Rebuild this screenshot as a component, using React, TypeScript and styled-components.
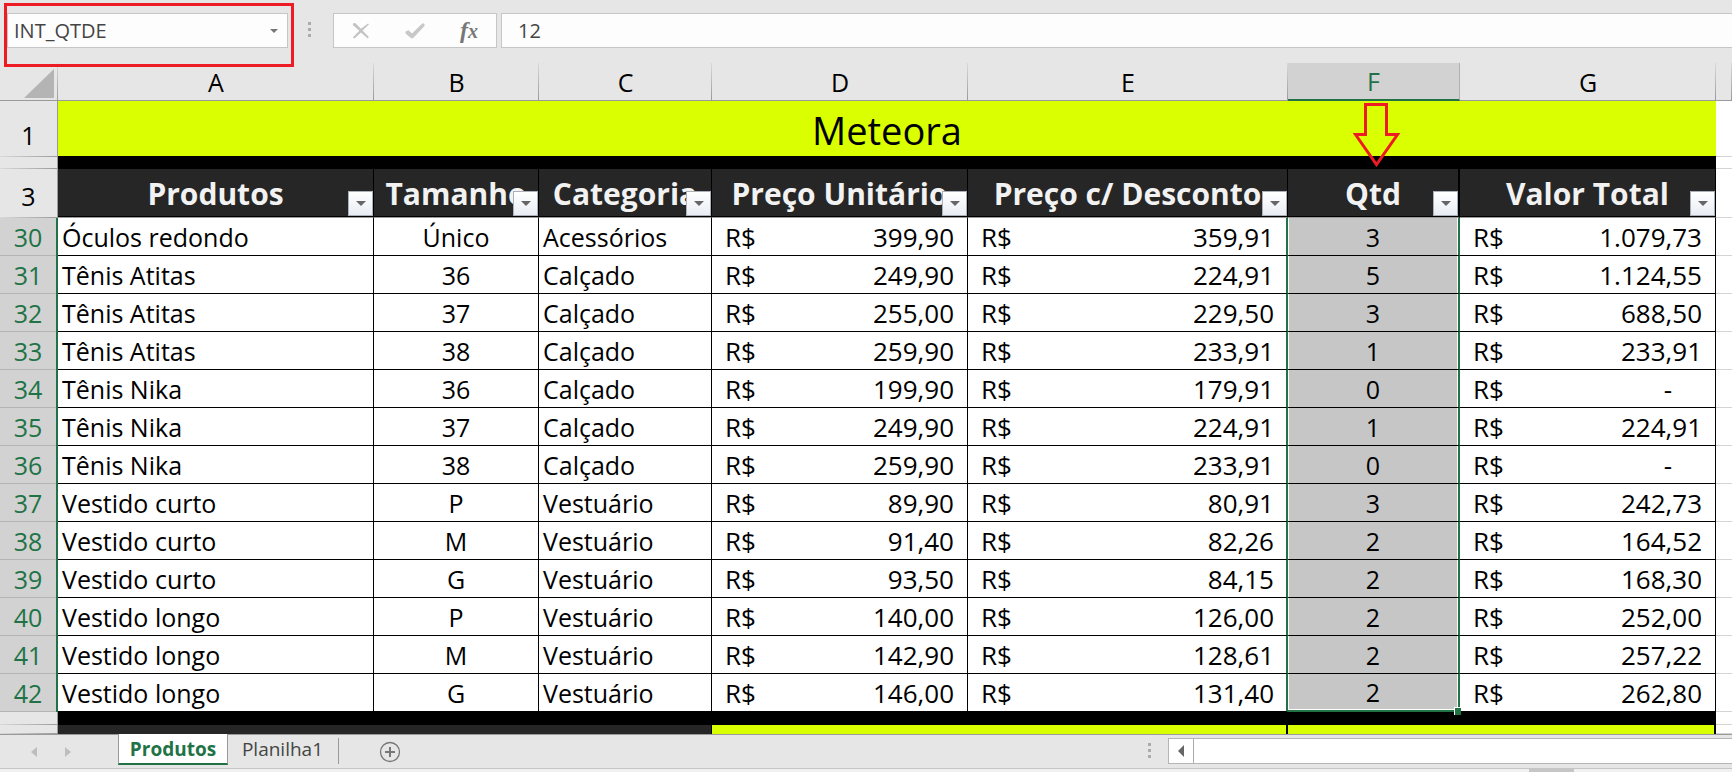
import React from 'react';
import styled, { createGlobalStyle, css } from 'styled-components';

const GREEN = '#217346';
const LIME = '#d9ff00';
const RED = '#ed1c24';

const GlobalStyle = createGlobalStyle`
  * { box-sizing: border-box; }
  body { margin: 0; background: #e6e6e6; font-family: 'Open Sans', 'Noto Sans', sans-serif; color: #000; }
  button, input { font-family: inherit; margin: 0; padding: 0; border: 0; background: none; border-radius: 0; }
  button { cursor: pointer; }
  table { border-collapse: separate; border-spacing: 0; }
`;

const Window = styled.div`
  display: flex;
  flex-direction: column;
  min-height: 100vh;
  overflow: hidden;
`;

const FormulaBar = styled.header`
  display: flex;
  align-items: flex-start;
  padding: 13px 0 15px 7px;
`;

const NameBox = styled.div`
  position: relative;
  display: flex;
  width: 281px;
  height: 35px;
  background: #fdfdfd;
  border: 1px solid #c6c6c6;
`;

const Highlight = styled.div`
  position: absolute;
  inset: -11px -7px -20px -4px;
  z-index: 3;
  border: 3px solid ${RED};
  pointer-events: none;
`;

const BarInput = styled.input`
  flex: 1;
  min-width: 0;
  padding-left: ${(p: { $indent: number }) => p.$indent}px;
  font-size: 20px;
  line-height: 32px;
  color: #444;
  outline: 0;
`;

const NameArrow = styled.button`
  display: grid;
  place-items: center;
  width: 26px;
`;

const Dots = styled.div<{ $color: string }>`
  display: grid;
  gap: 3px;
  i { width: 3px; height: 3px; background: ${(p) => p.$color}; }
`;

const BarDots = styled(Dots)`
  margin: 9px 22px 0 20px;
`;

const FormulaTools = styled.div`
  display: flex;
  justify-content: space-around;
  align-items: center;
  width: 164px;
  height: 35px;
  margin-right: 4px;
  background: #fdfdfd;
  border: 1px solid #c6c6c6;
`;

const ToolButton = styled.button`
  display: grid;
  place-items: center;
  width: 32px;
  height: 32px;
`;

const Fx = styled.span`
  font: italic 700 24px/28px 'Liberation Serif', serif;
  color: #777;
  small { font-size: 20px; }
`;

const FormulaField = styled.div`
  display: flex;
  flex: 1;
  height: 35px;
  background: #fdfdfd;
  border: 1px solid #c6c6c6;
  border-right: 0;
`;

const SheetArea = styled.main`
  flex: 1;
  background: #fff;
`;

const Sheet = styled.table`
  width: 100%;
  table-layout: fixed;
  font-size: 25px;
  line-height: 36px;
  white-space: nowrap;
  th, td { padding: 0; overflow: hidden; font-weight: 400; }
`;

const fade = (dir: string) =>
  `linear-gradient(${dir}, #d9d9d9, #9a9a9a)`;

const ColumnHead = styled.th<{ $selected?: boolean }>`
  height: 38px;
  line-height: 36px;
  background: ${fade('to bottom')} right / 1px 100% no-repeat, #e6e6e6;
  border-bottom: 1px solid #9a9a9a;
  ${(p) =>
    p.$selected &&
    css`
      && { overflow: visible; }
      position: relative;
      z-index: 2;
      background: #d2d2d2;
      color: ${GREEN};
      border-right: 1px solid #b0b0b0;
      border-bottom: 2px solid ${GREEN};
    `}
`;

const Corner = styled(ColumnHead)`
  svg { display: block; margin: 3px 0 0 24px; }
`;

const RowHead = styled.th<{ $selected?: boolean }>`
  background: ${fade('to right')} bottom / 100% 1px no-repeat, #e6e6e6;
  border-right: 1px solid #9a9a9a;
  vertical-align: ${(p) => (p.$selected ? 'middle' : 'bottom')};
  && { padding-bottom: ${(p) => (p.scope && !p.$selected ? 4 : 0)}px; }
  ${(p) =>
    p.$selected &&
    css`
      background: linear-gradient(#b4b4b4, #b4b4b4) bottom / 100% 1px no-repeat, #d2d2d2;
      color: ${GREEN};
      border-right: 2px solid ${GREEN};
    `}
`;

const Arrow = styled.svg`
  position: absolute;
  top: 40px;
  left: 65px;
  pointer-events: none;
`;

const TitleRow = styled.tr`
  height: 56px;
`;

const TitleCell = styled.td`
  background: ${LIME};
  border-bottom: 1px solid #000;
  text-align: center;
  font-size: 38px;
  line-height: 52px;
  && { padding-top: 2px; }
`;

const GapRow = styled.tr<{ $height: number }>`
  height: ${(p) => p.$height}px;
  line-height: 0;
`;

const Fill = styled.td<{ $color: string; $edge?: number }>`
  background: ${(p) => p.$color};
  border-right: ${(p) => p.$edge ?? 0}px solid #000;
`;

const Blank = styled.td`
  background: #fff;
  border-bottom: 1px solid #d4d4d4;
`;

const HeadRow = styled.tr`
  height: 49px;
`;

const FieldHead = styled.th<{ $edge?: number }>`
  position: relative;
  background: linear-gradient(#000, #000) bottom / 100% 1px no-repeat, #262626;
  border-right: ${(p) => p.$edge ?? 1}px solid #000;
  border-bottom: 1px solid #9a9a9a;
  color: #f2f2f2;
  font-size: 30px;
  && { padding-top: 1px; font-weight: 700; }
`;

const FilterButton = styled.button`
  position: absolute;
  right: 0;
  bottom: 1px;
  display: grid;
  place-items: center;
  width: 25px;
  height: 25px;
  background: linear-gradient(#fff, #e9edf3);
  border: 1px solid #a9b0ba;
`;

const DataRow = styled.tr`
  height: 38px;
`;

const Cell = styled.td<{ $align?: string; $beforeSelection?: boolean }>`
  background: #fff;
  border-right: 1px solid #000;
  border-bottom: 1px solid #000;
  text-align: ${(p) => p.$align ?? 'left'};
  && { padding: 1px 0 0 ${(p) => (p.$align ? 0 : 4)}px; }
  ${(p) => p.$beforeSelection && css`border-right: 2px solid ${GREEN};`}
`;

const SelectedCell = styled(Cell)<{ $last?: boolean }>`
  position: relative;
  background: #c6c6c6;
  border-right: 2px solid ${GREEN};
  box-shadow: inset 1px 0 #fff, inset -1px 0 #fff;
  ${(p) =>
    p.$last &&
    css`
      && { overflow: visible; padding-top: 0; }
      border-bottom: 2px solid ${GREEN};
      box-shadow: inset 1px 0 #fff, inset -1px -1px #fff;
    `}
`;

const FillHandle = styled.span`
  position: absolute;
  right: -3px;
  bottom: -5px;
  z-index: 3;
  width: 7px;
  height: 8px;
  background: ${GREEN};
  border: solid #fff;
  border-width: 1px 0 0 1px;
`;

const Money = styled.div<{ $zero: boolean; $inset: number }>`
  display: flex;
  justify-content: space-between;
  padding: 0 ${(p) => (p.$zero ? 43 : p.$inset)}px 0 9px;
  font-size: 26px;
`;

const Footer = styled.footer`
  background: #e6e6e6;
`;

const TabBar = styled.nav`
  display: flex;
  align-items: flex-start;
  height: 34px;
  border-top: 1px solid #9a9a9a;
`;

const SheetNav = styled.div`
  display: flex;
  gap: 22px;
  width: 118px;
  padding: 11px 0 0 28px;
  button { display: grid; place-items: center; width: 12px; height: 12px; }
`;

const Tab = styled.button<{ $active?: boolean }>`
  width: 110px;
  height: 28px;
  font-size: 19px;
  line-height: 26px;
  color: #444;
  border-right: 1px solid transparent;
  ${(p) =>
    p.$active &&
    css`
      height: 31px;
      margin-top: -1px;
      font-weight: 700;
      color: ${GREEN};
      background: #fff;
      border: solid #9a9a9a;
      border-width: 0 1px 0 1px;
      border-bottom: 2px solid ${GREEN};
    `}
`;

const TabDivider = styled.i`
  width: 1px;
  height: 26px;
  margin-top: 3px;
  background: #9a9a9a;
`;

const AddSheet = styled.button`
  margin: 6px 0 0 40px;
  height: 22px;
`;

const Spacer = styled.div`
  flex: 1;
`;

const TabDots = styled(Dots)`
  margin: 8px 17px 0 0;
`;

const Scrollbar = styled.div`
  display: flex;
  width: 564px;
  height: 26px;
  margin-top: 3px;
  background: #fff;
  border: 1px solid #b5b5b5;
  border-right: 0;
  button {
    display: grid;
    place-items: center;
    width: 25px;
    border-right: 1px solid #ababab;
  }
`;

const StatusBar = styled.div`
  display: flex;
  justify-content: flex-end;
  height: 4px;
  padding-right: 158px;
  background: #f1f1f1;
  border-top: 1px solid #c6c6c6;
  i { width: 45px; background: #c6c6c6; }
`;

const Caret = ({ w, color }: { w: number; color: string }) => (
  <svg width={w} height={w / 2} viewBox="0 0 8 4"><path d="M0 0h8L4 4z" fill={color} /></svg>
);

const SideCaret = ({ right, color, h = 10 }: { right?: boolean; color: string; h?: number }) => (
  <svg width="6" height={h} viewBox="0 0 6 12" preserveAspectRatio="none">
    <path d={right ? 'M0 0v12l6-6z' : 'M6 0v12L0 6z'} fill={color} />
  </svg>
);

const columns = [
  { letter: 'A', width: 316, name: 'Produtos' },
  { letter: 'B', width: 165, name: 'Tamanho' },
  { letter: 'C', width: 173, name: 'Categoria' },
  { letter: 'D', width: 256, name: 'Preço Unitário' },
  { letter: 'E', width: 320, name: 'Preço c/ Desconto' },
  { letter: 'F', width: 172, name: 'Qtd' },
  { letter: 'G', width: 256, name: 'Valor Total' },
];

const rows = [
  ['Óculos redondo', 'Único', 'Acessórios', '399,90', '359,91', '3', '1.079,73'],
  ['Tênis Atitas', '36', 'Calçado', '249,90', '224,91', '5', '1.124,55'],
  ['Tênis Atitas', '37', 'Calçado', '255,00', '229,50', '3', '688,50'],
  ['Tênis Atitas', '38', 'Calçado', '259,90', '233,91', '1', '233,91'],
  ['Tênis Nika', '36', 'Calçado', '199,90', '179,91', '0', '-'],
  ['Tênis Nika', '37', 'Calçado', '249,90', '224,91', '1', '224,91'],
  ['Tênis Nika', '38', 'Calçado', '259,90', '233,91', '0', '-'],
  ['Vestido curto', 'P', 'Vestuário', '89,90', '80,91', '3', '242,73'],
  ['Vestido curto', 'M', 'Vestuário', '91,40', '82,26', '2', '164,52'],
  ['Vestido curto', 'G', 'Vestuário', '93,50', '84,15', '2', '168,30'],
  ['Vestido longo', 'P', 'Vestuário', '140,00', '126,00', '2', '252,00'],
  ['Vestido longo', 'M', 'Vestuário', '142,90', '128,61', '2', '257,22'],
  ['Vestido longo', 'G', 'Vestuário', '146,00', '131,40', '2', '262,80'],
];

const Amount = ({ value, inset = 13 }: { value: string; inset?: number }) => (
  <Money $zero={value === '-'} $inset={inset}><span>R$</span><span>{value}</span></Money>
);

export default function App() {
  return (
    <Window>
      <GlobalStyle />
      <FormulaBar>
        <NameBox>
          <BarInput $indent={6} aria-label="Caixa de nome" defaultValue="INT_QTDE" />
          <NameArrow aria-label="Abrir lista de nomes"><Caret w={8} color="#777" /></NameArrow>
          <Highlight />
        </NameBox>
        <BarDots $color="#ababab"><i /><i /><i /></BarDots>
        <FormulaTools>
          <ToolButton aria-label="Cancelar">
            <svg width="18" height="18" viewBox="0 0 18 18" fill="#c3c3c3">
              <path d="M1.500 1L3.500 1.200L9 6.800L16 1.500L17 2.300L10.500 8.500L16.800 15L15.800 16.500L9 10.500L2.500 16.500L0.800 15.500L7.300 8.800L0.800 3z" />
            </svg>
          </ToolButton>
          <ToolButton aria-label="Inserir">
            <svg width="20" height="18" viewBox="0 0 20 18" fill="#c8c8c8">
              <path d="M0.500 9.500L3.500 8.300L7 11.500L17.500 1.200L19.500 1.800V4L8.500 15.800L6.500 16.500L0.500 11.500z" />
            </svg>
          </ToolButton>
          <ToolButton aria-label="Inserir função"><Fx>f<small>x</small></Fx></ToolButton>
        </FormulaTools>
        <FormulaField><BarInput $indent={16} aria-label="Barra de fórmulas" defaultValue="12" /></FormulaField>
      </FormulaBar>

      <SheetArea>
        <Sheet>
          <colgroup>
            <col width={58} />
            {columns.map((c) => <col key={c.letter} width={c.width} />)}
            <col />
          </colgroup>
          <thead>
            <tr>
              <Corner aria-label="Selecionar tudo">
                <svg width="30" height="29" viewBox="0 0 30 29"><path d="M30 0v29H0z" fill="#b4b4b4" /></svg>
              </Corner>
              {columns.map((c) => (
                <ColumnHead key={c.letter} scope="col" $selected={c.letter === 'F'}>
                  {c.letter}
                  {c.letter === 'F' && (
                    <Arrow width="48" height="64" viewBox="0 0 48 64" fill="none" stroke={RED} strokeWidth="3">
                      <path d="M12.500 1.500h21v30h11L23.500 61.500L2.500 31.500h10z" />
                    </Arrow>
                  )}
                </ColumnHead>
              ))}
              <ColumnHead as="td" />
            </tr>
          </thead>
          <tbody>
            <TitleRow>
              <RowHead scope="row">1</RowHead>
              <TitleCell colSpan={7}>Meteora</TitleCell>
              <Blank />
            </TitleRow>
            <GapRow $height={12}>
              <RowHead as="td" /><Fill $color="#000" colSpan={7} /><Blank />
            </GapRow>
            <HeadRow>
              <RowHead scope="row">3</RowHead>
              {columns.map((c) => (
                <FieldHead key={c.name} scope="col" $edge={c.letter === 'F' ? 2 : 1}>
                  {c.name}
                  <FilterButton aria-label={`Filtrar ${c.name}`}><Caret w={10} color="#666" /></FilterButton>
                </FieldHead>
              ))}
              <Blank />
            </HeadRow>
            {rows.map((r, i) => (
              <DataRow key={i}>
                <RowHead scope="row" $selected>{30 + i}</RowHead>
                <Cell>{r[0]}</Cell>
                <Cell $align="center">{r[1]}</Cell>
                <Cell>{r[2]}</Cell>
                <Cell><Amount value={r[3]} /></Cell>
                <Cell $beforeSelection><Amount value={r[4]} inset={12} /></Cell>
                <SelectedCell $align="center" $last={i === rows.length - 1}>
                  {r[5]}
                  {i === rows.length - 1 && <FillHandle />}
                </SelectedCell>
                <Cell><Amount value={r[6]} /></Cell>
                <Blank />
              </DataRow>
            ))}
            <GapRow $height={13}>
              <RowHead as="td" /><Fill $color="#000" colSpan={7} /><Blank />
            </GapRow>
            <GapRow $height={9}>
              <RowHead as="td" />
              <Fill $color="#262626" colSpan={3} $edge={1} />
              <Fill $color={LIME} colSpan={2} $edge={2} />
              <Fill $color={LIME} colSpan={2} $edge={2} />
              <Blank />
            </GapRow>
          </tbody>
        </Sheet>
      </SheetArea>

      <Footer>
        <TabBar>
          <SheetNav>
            <button aria-label="Planilha anterior"><SideCaret color="#bdbdbd" /></button>
            <button aria-label="Próxima planilha"><SideCaret right color="#bdbdbd" /></button>
          </SheetNav>
          <Tab $active>Produtos</Tab>
          <Tab>Planilha1</Tab>
          <TabDivider />
          <AddSheet aria-label="Nova planilha">
            <svg width="22" height="22" viewBox="0 0 22 22" fill="none" stroke="#777">
              <circle cx="11" cy="11" r="9.500" strokeWidth="1.300" />
              <path d="M11 6v10M6 11h10" strokeWidth="2" />
            </svg>
          </AddSheet>
          <Spacer />
          <TabDots $color="#ababab"><i /><i /><i /></TabDots>
          <Scrollbar>
            <button aria-label="Rolar para a esquerda"><SideCaret color="#666" h={12} /></button>
          </Scrollbar>
        </TabBar>
        <StatusBar><i /></StatusBar>
      </Footer>
    </Window>
  );
}
